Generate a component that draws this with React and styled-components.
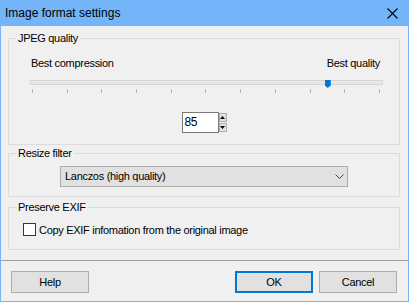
import React from 'react';
import styled, { createGlobalStyle } from 'styled-components';

const GlobalStyle = createGlobalStyle`
  body {
    margin: 0;
    font-family: 'Liberation Sans', Arial, sans-serif;
    font-size: 11px;
    letter-spacing: -0.3px;
    color: #000;
    background: #fff;
  }
`;

// dialog frame
const Window = styled.div`
  width: 409px;
  height: 302px;
  box-sizing: border-box;
  padding: 0 1px 1px;
  background: #73b5f8;
  display: flex;
  flex-direction: column;
`;

const TitleBar = styled.div`
  height: 26px;
  display: flex;
  align-items: center;
  justify-content: space-between;
  padding: 0 10px 0 4px;
  font-size: 12px;
  letter-spacing: 0;
  line-height: 26px;
`;

const CloseIcon = () => (
  <svg width="11" height="11" viewBox="0 0 11 11">
    <path d="M0.5 0.5 L10.5 10.5 M10.5 0.5 L0.5 10.5" stroke="#000" strokeWidth="1.1" fill="none" />
  </svg>
);

const Client = styled.div`
  flex: 1;
  background: #f0f0f0;
  display: flex;
  flex-direction: column;
`;

const Groups = styled.div`
  display: flex;
  flex-direction: column;
  padding: 0 8px 0 7px;
`;

const GroupBox = styled.fieldset`
  margin: ${(p) => p.$top}px 0 0;
  padding: 0;
  min-width: 0;
  border: 1px solid #dcdcdc;
`;

const Legend = styled.legend`
  margin-left: 7px;
  padding: 0 2px;
  line-height: 15px;
`;

// JPEG quality
const RangeLabels = styled.div`
  display: flex;
  justify-content: space-between;
  margin-top: 10px;
  padding: 0 19px 0 22px;
  line-height: 15px;
`;

const Slider = styled.div`
  position: relative;
  margin: 9px 16px 0 21px;
`;

const Track = styled.div`
  height: 5px;
  box-sizing: border-box;
  border: 1px solid #d6d6d6;
  background: #e7e7e7;
`;

const ThumbRail = styled.div`
  position: absolute;
  top: 0;
  left: 2px;
  right: 3px;
`;

const Thumb = styled.div`
  position: absolute;
  top: 0;
  width: 6px;
  height: 8px;
  transform: translateX(-50%);
  background: #0078d7;
  clip-path: polygon(0 0, 100% 0, 100% 70%, 50% 100%, 0 70%);
`;

const Ticks = styled.div`
  display: flex;
  justify-content: space-between;
  margin: 4px 19px 0 23px;
`;

const Tick = styled.span`
  width: 1px;
  height: 4px;
  background: #b4b4b4;
`;

const SpinRow = styled.div`
  display: flex;
  justify-content: center;
  margin: 19px 0 11px;
`;

const SpinInput = styled.div`
  width: 37px;
  height: 21px;
  box-sizing: border-box;
  border: 1px solid #7a7a7a;
  background: #fff;
  padding-left: 2px;
  line-height: 19px;
  font-size: 12px;
`;

const Spinner = styled.div`
  display: flex;
  flex-direction: column;
  gap: 1px;
  margin-top: 1px;
`;

const SpinButton = styled.div`
  width: 8px;
  height: 9px;
  box-sizing: border-box;
  border: 1px solid #adadad;
  background: #e1e1e1;
  display: flex;
  align-items: center;
  justify-content: center;
`;

const Arrow = ({ down }) => (
  <svg width="5" height="3" viewBox="0 0 5 3">
    <polygon points={down ? '0,0 5,0 2.5,3' : '0,3 5,3 2.5,0'} fill="#000" />
  </svg>
);

// resize filter
const Combo = styled.div`
  width: 288px;
  height: 21px;
  box-sizing: border-box;
  margin: 5px auto 9px;
  border: 1px solid #adadad;
  background: #e1e1e1;
  display: flex;
  align-items: center;
  justify-content: space-between;
  padding: 0 3px 0 4px;
  line-height: 19px;
`;

const Chevron = () => (
  <svg width="9" height="5" viewBox="0 0 9 5">
    <polyline points="0.5,0.5 4.5,4.5 8.5,0.5" stroke="#404040" strokeWidth="1" fill="none" />
  </svg>
);

// exif
const CheckRow = styled.label`
  display: flex;
  align-items: center;
  height: 15px;
  margin: 7px 0 12px 14px;
`;

const CheckBox = styled.span`
  width: 13px;
  height: 13px;
  box-sizing: border-box;
  border: 1px solid #1e3a66;
  background: #fff;
  margin-right: 3px;
`;

const Separator = styled.div`
  height: 1px;
  margin-top: 10px;
  background: #a0a0a0;
`;

const Footer = styled.div`
  display: flex;
  align-items: flex-start;
  padding: 10px 11px 0 10px;
`;

const Spacer = styled.div`
  flex: 1;
`;

const Button = styled.button`
  width: 78px;
  height: 22px;
  box-sizing: border-box;
  margin-left: ${(p) => p.$gap || 0}px;
  padding: 0;
  border: ${(p) => (p.$primary ? '2px solid #0078d7' : '1px solid #adadad')};
  background: #e1e1e1;
  font: inherit;
  letter-spacing: inherit;
  color: #000;
`;

export default function App() {
  const quality = 85;

  return (
    <>
      <GlobalStyle />
      <Window>
        <TitleBar>
          <span>Image format settings</span>
          <CloseIcon />
        </TitleBar>
        <Client>
          <Groups>
            <GroupBox $top={5}>
              <Legend>JPEG quality</Legend>
              <RangeLabels>
                <span>Best compression</span>
                <span>Best quality</span>
              </RangeLabels>
              <Slider>
                <Track />
                <ThumbRail>
                  <Thumb style={{ left: `${quality}%` }} />
                </ThumbRail>
              </Slider>
              <Ticks>
                {Array.from({ length: 11 }).map((_, i) => (
                  <Tick key={i} />
                ))}
              </Ticks>
              <SpinRow>
                <SpinInput>{quality}</SpinInput>
                <Spinner>
                  <SpinButton><Arrow /></SpinButton>
                  <SpinButton><Arrow down /></SpinButton>
                </Spinner>
              </SpinRow>
            </GroupBox>

            <GroupBox $top={1}>
              <Legend>Resize filter</Legend>
              <Combo>
                <span>Lanczos (high quality)</span>
                <Chevron />
              </Combo>
            </GroupBox>

            <GroupBox $top={3}>
              <Legend>Preserve EXIF</Legend>
              <CheckRow>
                <CheckBox />
                <span>Copy EXIF infomation from the original image</span>
              </CheckRow>
            </GroupBox>
          </Groups>

          <Separator />
          <Footer>
            <Button>Help</Button>
            <Spacer />
            <Button $primary>OK</Button>
            <Button $gap={6}>Cancel</Button>
          </Footer>
        </Client>
      </Window>
    </>
  );
}
